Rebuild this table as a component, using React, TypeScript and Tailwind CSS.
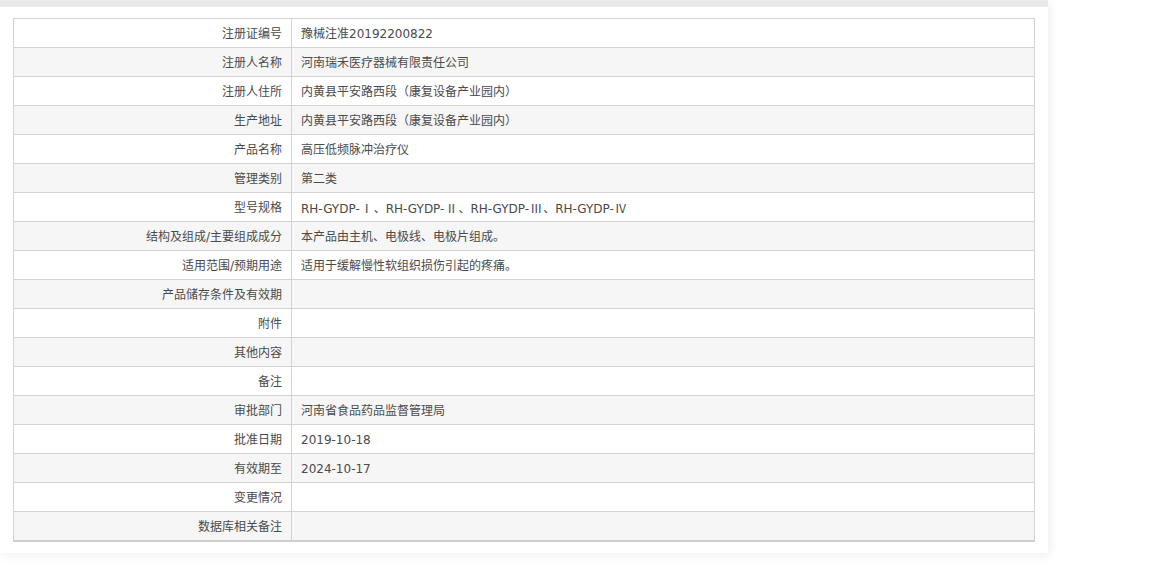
import React from 'react';

const rows: [string, string][] = [
  ['注册证编号', '豫械注准20192200822'],
  ['注册人名称', '河南瑞禾医疗器械有限责任公司'],
  ['注册人住所', '内黄县平安路西段（康复设备产业园内）'],
  ['生产地址', '内黄县平安路西段（康复设备产业园内）'],
  ['产品名称', '高压低频脉冲治疗仪'],
  ['管理类别', '第二类'],
  ['型号规格', 'RH-GYDP-Ⅰ、RH-GYDP-Ⅱ、RH-GYDP-Ⅲ、RH-GYDP-Ⅳ'],
  ['结构及组成/主要组成成分', '本产品由主机、电极线、电极片组成。'],
  ['适用范围/预期用途', '适用于缓解慢性软组织损伤引起的疼痛。'],
  ['产品储存条件及有效期', ''],
  ['附件', ''],
  ['其他内容', ''],
  ['备注', ''],
  ['审批部门', '河南省食品药品监督管理局'],
  ['批准日期', '2019-10-18'],
  ['有效期至', '2024-10-17'],
  ['变更情况', ''],
  ['数据库相关备注', ''],
];

// roman numerals should come from the CJK font (full-width glyphs)
const renderValue = (value: string) =>
  value.split(/([Ⅰ-Ⅻ])/).map((part, i) =>
    /^[Ⅰ-Ⅻ]$/.test(part) ? (
      <span key={i} className="inline-block w-[14px] text-center font-['Noto_Sans_CJK_SC']">
        {part}
      </span>
    ) : (
      <React.Fragment key={i}>{part}</React.Fragment>
    )
  );

export default function App() {
  return (
    <div
      className="min-h-[572px] bg-white"
      style={{ fontFamily: '"DejaVu Sans", "Noto Sans CJK SC", sans-serif' }}
    >
      <div className="w-[1048px] bg-white shadow-[2px_2px_10px_rgba(0,0,0,0.07)]">
        <div className="h-[7px] bg-[#e9e9e9]" />
        <div className="px-[13px] pt-[11px] pb-[11px]">
          <table className="w-[1022px] border-collapse border border-[#d3d3d3] border-b-2 border-b-[#cfcfcf] text-[12px] text-[#4a4a4a] table-fixed">
            <colgroup>
              <col className="w-[278px]" />
              <col />
            </colgroup>
            <tbody>
              {rows.map(([label, value], i) => (
                <tr key={label} className={i % 2 === 1 ? 'bg-[#f6f6f6]' : 'bg-white'}>
                  <td className="h-[29px] border border-[#d3d3d3] pr-[9px] pt-[2px] text-right align-middle leading-none">
                    {label}
                  </td>
                  <td className="h-[29px] border border-[#d3d3d3] pl-[9px] pt-[2px] text-left align-middle leading-none">
                    {renderValue(value)}
                  </td>
                </tr>
              ))}
            </tbody>
          </table>
        </div>
      </div>
    </div>
  );
}
